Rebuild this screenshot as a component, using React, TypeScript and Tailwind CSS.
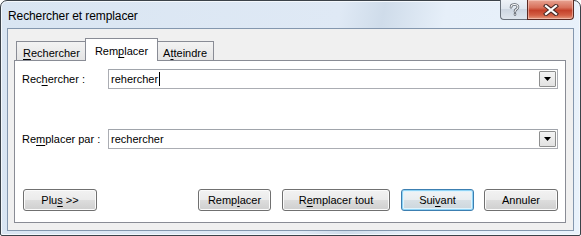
import React from "react";

const font = "font-['Liberation_Sans',Arial,sans-serif]";

function Key({ text, at }: { text: string; at: number }) {
  return (
    <span className="whitespace-pre">
      {text.slice(0, at)}
      <span className="underline underline-offset-[2px] decoration-1">{text[at]}</span>
      {text.slice(at + 1)}
    </span>
  );
}

function Combo({ value, caret }: { value: string; caret?: boolean }) {
  return (
    <div className="flex-1 h-[20px] flex items-center border border-[#abadb3] border-t-[#a0a4ab] bg-white">
      <div className="flex-1 pl-[2px] text-[11px] leading-none text-black flex items-center">
        {value}
        {caret && <span className="inline-block w-px h-[14px] bg-black ml-px" />}
      </div>
      <div className="w-[17px] h-[16px] mr-px border border-[#8e8f8f] rounded-[1px] bg-[linear-gradient(#f4f4f4,#e2e2e2)] flex items-center justify-center">
        <svg width="7" height="4" viewBox="0 0 7 4">
          <path d="M0 0h7L3.5 4z" fill="#000" />
        </svg>
      </div>
    </div>
  );
}

function Btn({
  children,
  w,
  primary,
  className = "",
}: {
  children: React.ReactNode;
  w: string;
  primary?: boolean;
  className?: string;
}) {
  return (
    <div
      className={`${w} h-[22px] rounded-[3px] border flex items-center justify-center text-[11px] text-black ${
        primary
          ? "border-[#3c7fb1] shadow-[inset_0_0_0_1px_#8fd3f5,inset_0_0_0_2px_#dff3fc] bg-[linear-gradient(#f1f4f6_0%,#e8edf0_50%,#d8e0e5_50%,#ccd6dc_100%)]"
          : "border-[#707070] shadow-[inset_0_0_0_1px_#fbfbfb] bg-[linear-gradient(#f2f2f2_0%,#ebebeb_50%,#dddddd_50%,#cfcfcf_100%)]"
      } ${className}`}
    >
      {children}
    </div>
  );
}

function Tab({ children, active }: { children: React.ReactNode; active?: boolean }) {
  if (active)
    return (
      <div className="relative z-10 h-[23px] -mb-px -mx-[2px] px-[9px] border border-b-0 border-[#898c95] bg-white flex items-start pt-[4px] text-[11px] text-black">
        {children}
      </div>
    );
  return (
    <div className="h-[19px] px-[6px] border border-b-0 border-[#898c95] bg-[linear-gradient(#f3f3f3,#e4e4e4)] flex items-start pt-[3px] text-[11px] text-black">
      {children}
    </div>
  );
}

export default function App() {
  return (
    <div className={`w-[581px] h-[236px] bg-white ${font}`}>
      <div className="h-full flex flex-col rounded-t-[7px] rounded-b-[2px] border border-[#3b4249] bg-[linear-gradient(100deg,#d9e5f2_0%,#dfe9f5_55%,#cfdcea_62%,#e6eff9_72%,#e9f2fb_100%)] shadow-[inset_0_0_0_1px_#f4f8fc]">
        <div className="h-[27px] flex items-start">
          <div className="pl-[7px] pt-[6px] text-[12px] tracking-[-0.1px] text-black">Rechercher et remplacer</div>
          <div className="flex-1" />
          <div className="flex -mt-px mr-[6px]">
            <div className="w-[27px] h-[20px] rounded-bl-[4px] border border-t-0 border-r-0 border-[#69717b] bg-[linear-gradient(#eef2f7_0%,#dfe6ee_45%,#cdd6e1_50%,#dfe6ee_100%)] flex items-center justify-center">
              <svg width="11" height="13" viewBox="0 0 11 13">
                <path
                  d="M2 4.2C2 2.4 3.4 1.5 5.5 1.5S9 2.5 9 4c0 1.6-1.4 2.1-2.3 2.8-.6.5-.7.9-.7 1.7M6 11v.5"
                  fill="none"
                  stroke="#5a6068"
                  strokeWidth="2.6"
                  strokeLinecap="round"
                />
                <path
                  d="M2 4.2C2 2.4 3.4 1.5 5.5 1.5S9 2.5 9 4c0 1.6-1.4 2.1-2.3 2.8-.6.5-.7.9-.7 1.7M6 11v.5"
                  fill="none"
                  stroke="#fff"
                  strokeWidth="1.1"
                  strokeLinecap="round"
                />
              </svg>
            </div>
            <div className="w-[47px] h-[20px] rounded-br-[4px] border border-t-0 border-[#5a2a22] bg-[linear-gradient(#e8a493_0%,#d8705a_40%,#c4412a_55%,#d35f44_80%,#e49a80_100%)] shadow-[inset_0_0_0_1px_rgba(255,220,210,0.5)] flex items-center justify-center">
              <svg width="16" height="12" viewBox="0 0 16 12">
                <path d="M3 2l10 8M13 2L3 10" stroke="#4a2a26" strokeWidth="4.2" strokeLinecap="square" />
                <path d="M3 2l10 8M13 2L3 10" stroke="#fff" strokeWidth="2.2" strokeLinecap="square" />
              </svg>
            </div>
          </div>
        </div>
        <div className="flex-1 mx-[6px] mb-[4px] border border-[#8497ae] bg-[#f0f0f0] pt-[8px] pl-[6px] pr-[7px] pb-[7px] flex flex-col">
          <div className="flex items-end pl-[2px] h-[23px]">
            <Tab>
              <Key text="Rechercher" at={0} />
            </Tab>
            <Tab active>
              <Key text="Remplacer" at={3} />
            </Tab>
            <Tab>
              <Key text="Atteindre" at={1} />
            </Tab>
          </div>
          <div className="flex-1 border border-[#898c95] bg-white pt-[8px] pl-[7px] pr-[7px] flex flex-col">
            <div className="flex items-center">
              <div className="w-[86px] text-[11px] text-black">
                <Key text="Rechercher :" at={3} />
              </div>
              <Combo value="rehercher" caret />
            </div>
            <div className="flex items-center mt-[40px]">
              <div className="w-[86px] text-[11px] text-black">
                <Key text="Remplacer par :" at={2} />
              </div>
              <Combo value="rechercher" />
            </div>
            <div className="flex items-center mt-[40px] pl-[1px]">
              <Btn w="w-[74px]">
                <Key text="Plus >>" at={3} />
              </Btn>
              <div className="flex-1" />
              <Btn w="w-[73px]">
                <Key text="Remplacer" at={4} />
              </Btn>
              <Btn w="w-[108px]" className="ml-[11px]">
                <Key text="Remplacer tout" at={1} />
              </Btn>
              <Btn w="w-[73px]" primary className="ml-[11px]">
                <Key text="Suivant" at={3} />
              </Btn>
              <Btn w="w-[74px]" className="ml-[10px]">
                Annuler
              </Btn>
            </div>
          </div>
        </div>
      </div>
    </div>
  );
}
